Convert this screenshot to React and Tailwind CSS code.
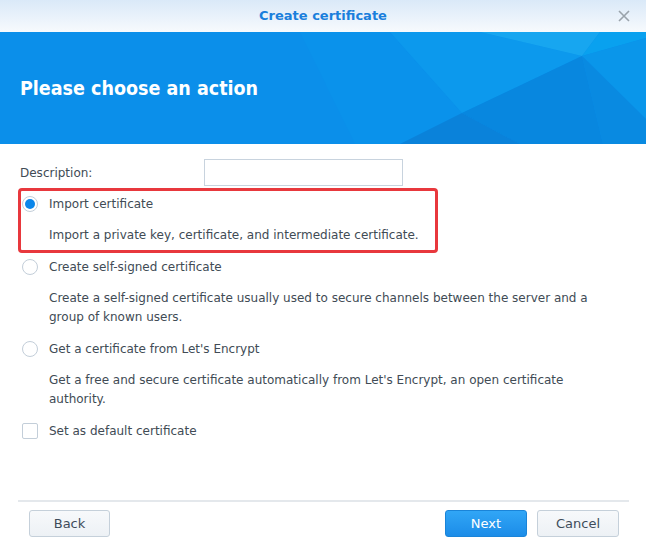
import React from "react";

function Radio({ checked }) {
  return (
    <span className="w-[16px] h-[16px] rounded-full border border-[#c3ced9] bg-white flex items-center justify-center shrink-0">
      {checked && <span className="w-[10px] h-[10px] rounded-full bg-[#0a86ea]" />}
    </span>
  );
}

function Option({ label, desc, checked }) {
  return (
    <div>
      <div className="flex items-center h-[19px] pl-[4px]">
        <Radio checked={checked} />
        <span className="ml-[11px]">{label}</span>
      </div>
      <p className="mt-[13px] pl-[31px] pr-[30px] leading-[19px]">{desc}</p>
    </div>
  );
}

function Banner() {
  return (
    <div className="relative h-[112px] bg-[#0b8fea] overflow-hidden">
      <svg className="absolute inset-0" width="646" height="112" viewBox="0 32 646 112">
        <polygon points="300,32 390,32 462,113 400,144 355,144" fill="#0a92eb" />
        <polygon points="390,32 480,32 582,56 462,113" fill="#0c99ed" />
        <polygon points="480,32 600,32 582,56" fill="#17a6f0" />
        <polygon points="600,32 646,32 646,38 582,56" fill="#09a1ef" />
        <polygon points="582,56 462,113 520,144 603,144" fill="#0887df" />
        <polygon points="462,113 400,144 520,144" fill="#0a82da" />
        <polygon points="582,56 646,38 646,119" fill="#0a96ea" />
        <polygon points="582,56 646,119 646,144 603,144" fill="#098ae1" />
      </svg>
      <div className="relative h-full flex items-center px-[20px] pt-[2px]">
        <h1
          className="text-white font-bold text-[19.5px]"
          style={{ fontFamily: '"DejaVu Sans Condensed", "DejaVu Sans", sans-serif' }}
        >
          Please choose an action
        </h1>
      </div>
    </div>
  );
}

export default function App() {
  return (
    <div
      className="w-[646px] h-[544px] bg-white flex flex-col text-[12px] text-[#414b55]"
      style={{ fontFamily: '"DejaVu Sans", Verdana, sans-serif' }}
    >
      <div className="relative h-[32px] shrink-0 flex items-center justify-center bg-gradient-to-b from-[#dae9f8] to-[#f7fafd]">
        <span className="text-[#1a7fdc] font-bold text-[13px]">Create certificate</span>
        <svg className="absolute right-[16px] top-[10px]" width="12" height="12" viewBox="0 0 12 12">
          <path d="M1 1L11 11M11 1L1 11" stroke="#9aa3ab" strokeWidth="1.6" />
        </svg>
      </div>

      <Banner />

      <div className="flex-1 px-[18px] pt-[15px]">
        <div className="flex items-center h-[27px]">
          <span className="w-[186px] pl-[2px]">Description:</span>
          <div className="w-[199px] h-[27px] border border-[#c8d3de]" />
        </div>

        <div className="mt-[2px] w-[420px] border-[3px] border-[#e8383d] rounded-[4px] pt-[3px] pb-[5px]">
          <div className="flex items-center h-[19px] pl-[1px]">
            <Radio checked />
            <span className="ml-[11px]">Import certificate</span>
          </div>
          <p className="mt-[13px] pl-[28px] leading-[19px]">
            Import a private key, certificate, and intermediate certificate.
          </p>
        </div>

        <div className="mt-[4px] flex flex-col gap-[12px]">
          <Option
            label="Create self-signed certificate"
            desc="Create a self-signed certificate usually used to secure channels between the server and a group of known users."
          />
          <Option
            label="Get a certificate from Let's Encrypt"
            desc="Get a free and secure certificate automatically from Let's Encrypt, an open certificate authority."
          />
          <div className="flex items-center h-[19px] pl-[4px]">
            <span className="w-[16px] h-[16px] border border-[#c3ced9] rounded-[2px] bg-white shrink-0" />
            <span className="ml-[11px]">Set as default certificate</span>
          </div>
        </div>
      </div>

      <div className="px-[18px] pb-[7px]">
        <div className="w-[611px] border-t-2 border-[#e4e8ec]" />
        <div className="flex items-center mt-[8px] px-[11px] pr-[9px]">
          <button className="w-[81px] h-[27px] rounded-[3px] border border-[#c5d0da] bg-gradient-to-b from-[#f7f9fb] to-[#edf1f5] text-[#3e4c5a] text-[13px]">
            Back
          </button>
          <div className="flex-1" />
          <button className="w-[82px] h-[27px] rounded-[3px] border border-[#1a84d8] bg-gradient-to-b from-[#31a6f6] to-[#1b8ce8] text-white text-[13px]">
            Next
          </button>
          <button className="ml-[10px] w-[82px] h-[27px] rounded-[3px] border border-[#c5d0da] bg-gradient-to-b from-[#f7f9fb] to-[#edf1f5] text-[#3e4c5a] text-[13px]">
            Cancel
          </button>
        </div>
      </div>
    </div>
  );
}
